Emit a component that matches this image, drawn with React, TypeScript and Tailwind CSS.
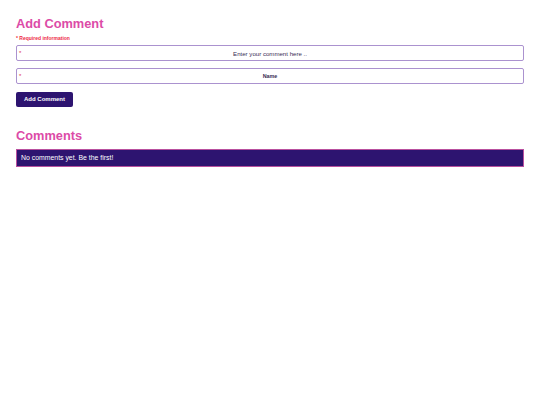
import { useState } from 'react';

const font = { fontFamily: '"Liberation Sans", Arial, sans-serif' };

function Field({ placeholder, bold }: { placeholder: string; bold?: boolean }) {
  return (
    <div className="flex h-[16px] items-center rounded-[2px] border border-[#ab92cf] bg-white">
      <span className="w-[5px] pl-[2px] text-[6px] leading-none text-[#e0334f]">*</span>
      <input
        className={`h-full flex-1 bg-transparent pr-[5px] text-center text-[#2d1a4d] outline-none placeholder:text-[#3a2d55] ${
          bold ? 'text-[5.4px] font-bold placeholder:font-bold' : 'text-[6.1px]'
        }`}
        placeholder={placeholder}
      />
    </div>
  );
}

export default function App() {
  const [comments] = useState<string[]>([]);

  return (
    <div className="min-h-[405px] bg-white px-4 pt-[16px]" style={font}>
      <h2 className="text-[12.8px] font-bold leading-[15px] text-[#dc4ba7]">Add Comment</h2>
      <p className="mt-[4px] text-[5px] font-bold leading-[6px] text-[#ee2a45]">* Required information</p>
      <form className="mt-[4px] flex flex-col" onSubmit={(e) => e.preventDefault()}>
        <Field placeholder="Enter your comment here .." />
        <div className="mt-[7px]">
          <Field placeholder="Name" bold />
        </div>
        <button
          type="submit"
          className="mt-[8px] h-[15px] w-[57px] rounded-[2px] bg-[#2d1470] text-[6px] font-bold text-white"
        >
          Add Comment
        </button>
      </form>

      <h2 className="mt-[21px] text-[12.8px] font-bold leading-[15px] text-[#dc4ba7]">Comments</h2>
      <div className="mt-[6px] flex h-[18px] items-center border-[1.5px] border-[#b9509f] bg-[#2d1470] px-[4px] text-[6.9px] text-white">
        {comments.length === 0 ? 'No comments yet. Be the first!' : null}
      </div>
    </div>
  );
}
